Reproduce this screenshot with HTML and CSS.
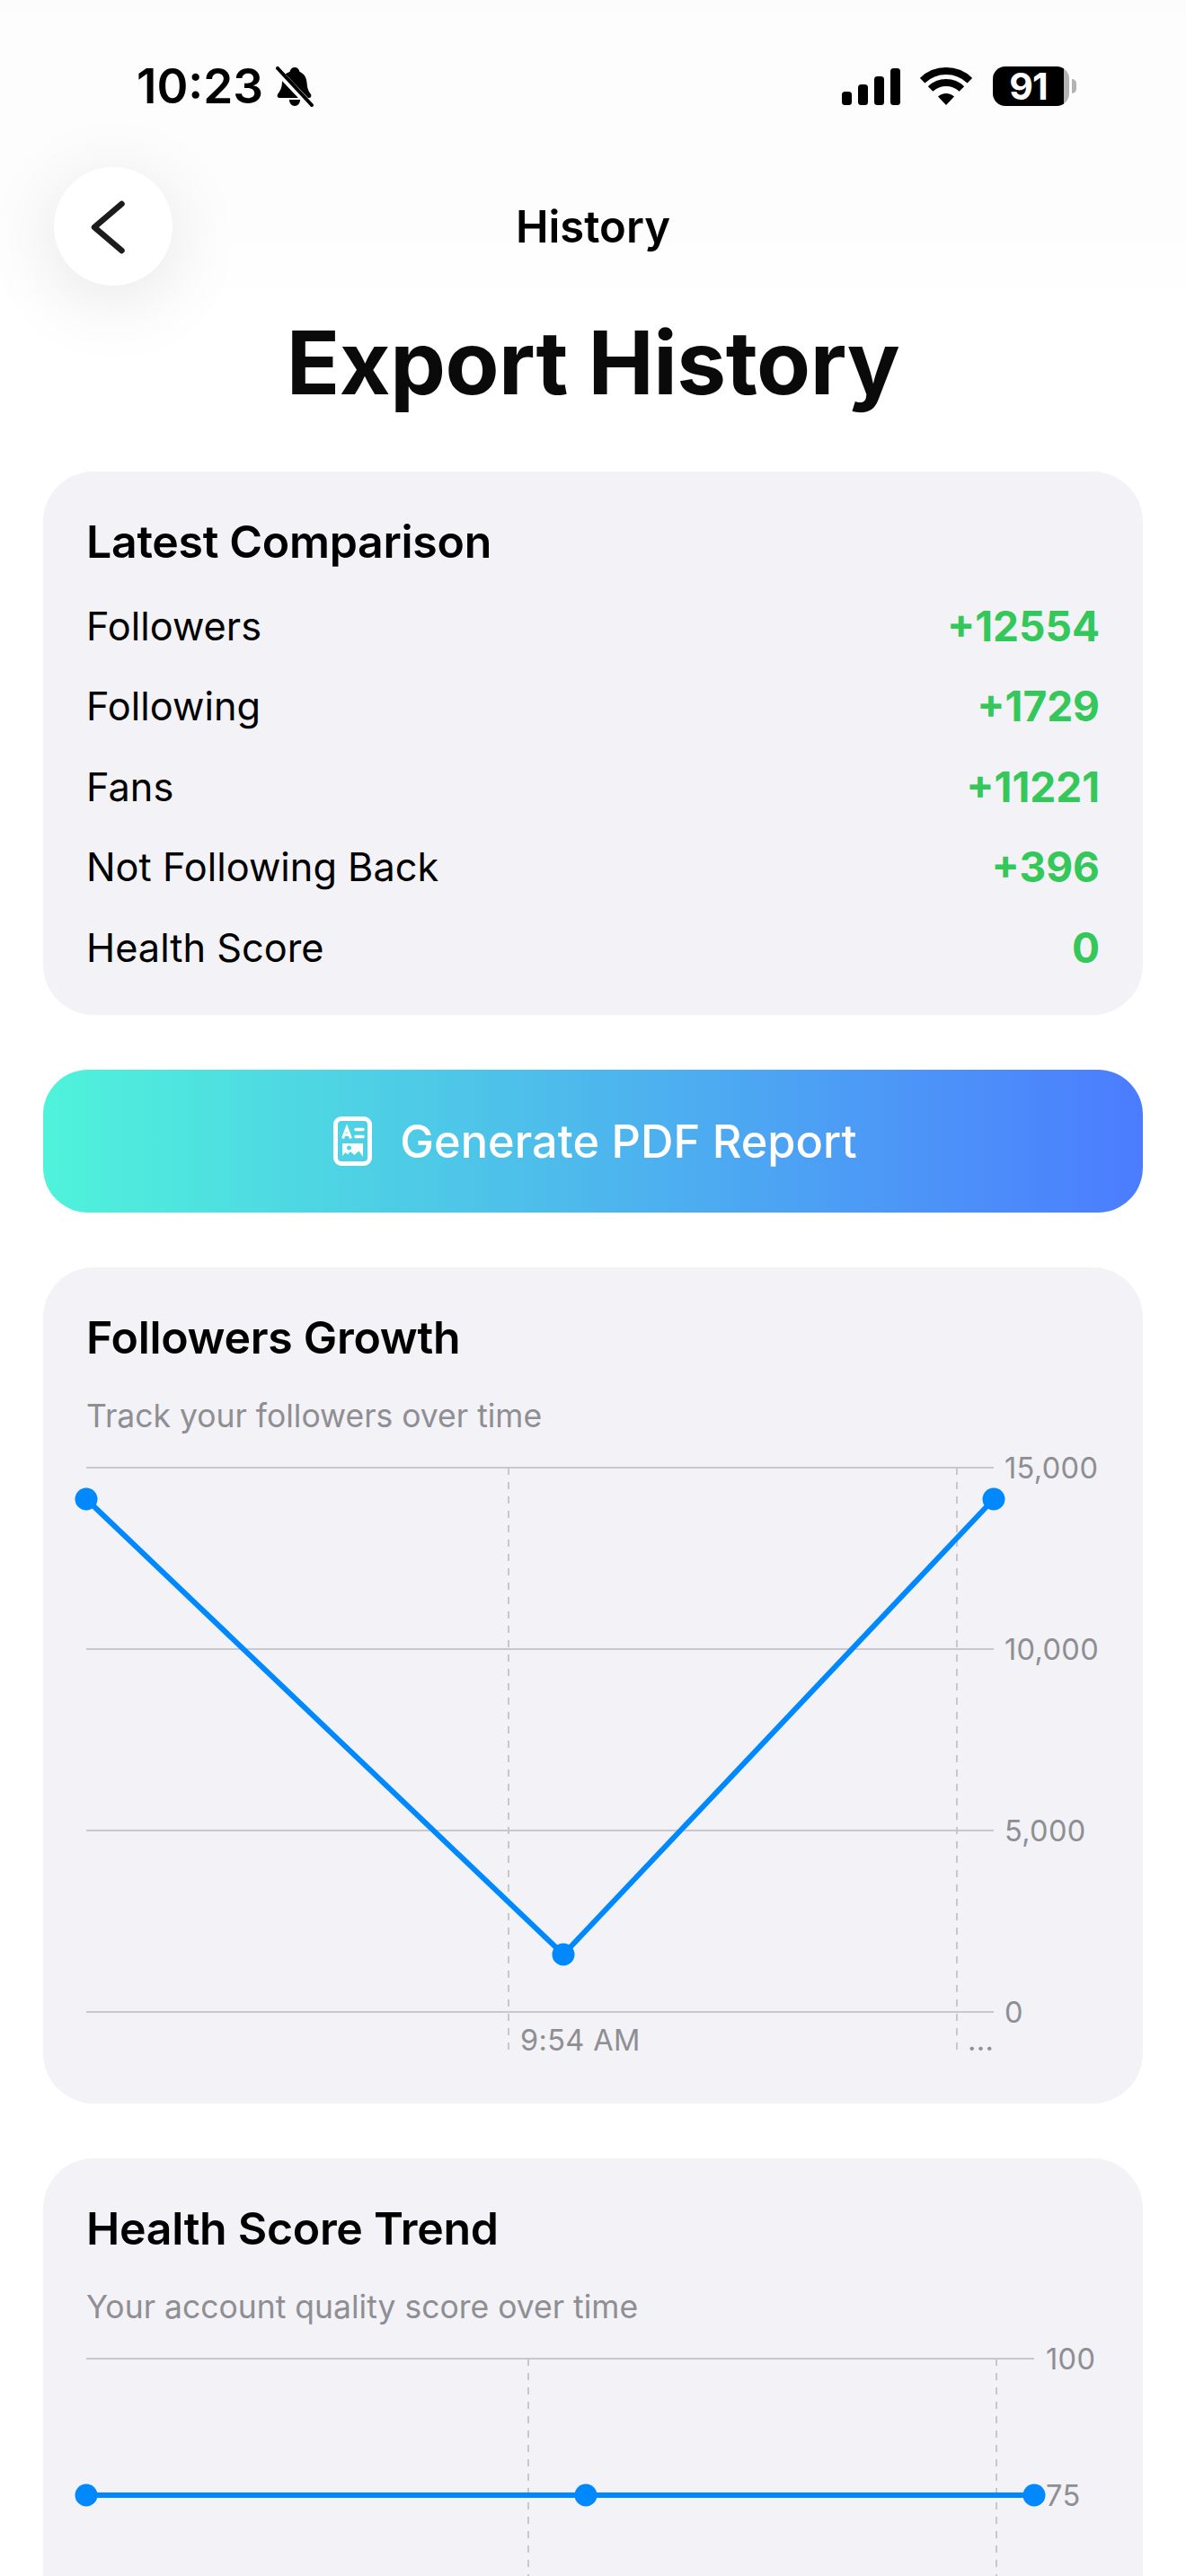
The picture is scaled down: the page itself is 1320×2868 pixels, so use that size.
FILE: index.html
```html
<!DOCTYPE html>
<html lang="en">
<head>
  <meta charset="UTF-8" />
  <title>Export History</title>
  <link rel="stylesheet" href="styles.css">
</head>
<body>
  <div class="page">
    <div class="statusbar">
      <div class="status-left">
        <span class="time">10:23</span>
        <svg class="bell" viewBox="0 0 42 45" width="42" height="45">
          <path d="M21 1c3 0 5 2 5.500 5 5 2 7.500 6 8 12 .5 6 1.500 9 4.500 13 1 2 0 4-2 4H4c-2 0-3-2-2-4 3-4 5-8 5-14C7 11 10 8 15.500 6 16 3 18 1 21 1z"/>
          <path d="M15 37h12c0 4-2.500 7-6 7s-6-3-6-7z"/>
          <path class="bell-gap" d="M0 3l38 40"/>
          <path class="bell-slash" d="M2 2l38 41"/>
        </svg>
      </div>
      <div class="status-right">
        <svg class="signal" viewBox="0 0 65 41" width="65" height="41">
          <rect x="0" y="26" width="11" height="15" rx="3.500"/>
          <rect x="18" y="18" width="11" height="23" rx="3.500"/>
          <rect x="36" y="9" width="11" height="32" rx="3.500"/>
          <rect x="54" y="0" width="11" height="41" rx="3.500"/>
        </svg>
        <svg class="wifi" viewBox="0 0 58 42" width="58" height="42">
          <path class="wifi-arc" d="M2.600 14.700A38 38 0 0 1 55.400 14.700"/>
          <path class="wifi-arc" d="M11.600 24A25 25 0 0 1 46.400 24"/>
          <path d="M29 42L20 32.600A13 13 0 0 1 38 32.600z"/>
        </svg>
        <div class="battery">
          <div class="battery-body"><span>91</span></div>
          <div class="battery-nub"></div>
        </div>
      </div>
    </div>

    <div class="nav">
      <div class="back">
        <svg viewBox="0 0 132 132" width="132" height="132">
          <path d="M75.500 41L45 67L75.500 93" class="chevron"/>
        </svg>
      </div>
      <div class="nav-title">History</div>
    </div>

    <h1 class="page-title">Export History</h1>

    <div class="content">
      <section class="card summary">
        <h2 class="card-title">Latest Comparison</h2>
        <div class="rows">
          <div class="row"><span>Followers</span><span class="delta">+12554</span></div>
          <div class="row"><span>Following</span><span class="delta">+1729</span></div>
          <div class="row"><span>Fans</span><span class="delta">+11221</span></div>
          <div class="row"><span>Not Following Back</span><span class="delta">+396</span></div>
          <div class="row"><span>Health Score</span><span class="delta">0</span></div>
        </div>
      </section>

      <button class="report-btn">
        <svg viewBox="0 0 43 55" width="43" height="55">
          <rect class="doc" x="2.500" y="2.500" width="38" height="50" rx="6.500"/>
          <path class="doc-a" d="M10.500 24.500L15 12.500l4.500 12M12.200 20.500h5.600"/>
          <path class="doc-line" d="M25 14.500h8M25 22.500h8"/>
          <path class="doc-pic" d="M10 30h23v15l-4.500-6.500-3.500 3-1.500 1.500-4.500-4-3 3.500-2.500-2.500L10 44z"/>
          <circle class="doc-hole" cx="17.500" cy="35" r="2.500"/>
        </svg>
        <span>Generate PDF Report</span>
      </button>

      <section class="card">
        <h2 class="card-title">Followers Growth</h2>
        <p class="card-sub">Track your followers over time</p>
        <svg class="chart chart-growth" viewBox="48 1600 1224 741" width="1224" height="741">
          <path class="grid" d="M96 1633H1106M96 1835H1106M96 2037H1106M96 2239H1106"/>
          <path class="tick" d="M566 1633V2288M1065 1633V2288"/>
          <polyline class="series" points="96,1668 627,2175 1106,1668"/>
          <circle class="dot" cx="96" cy="1668" r="12.500"/>
          <circle class="dot" cx="627" cy="2175" r="12.500"/>
          <circle class="dot" cx="1106" cy="1668" r="12.500"/>
          <text class="axis-y" x="1118" y="1645">15,000</text>
          <text class="axis-y" x="1118" y="1847">10,000</text>
          <text class="axis-y" x="1118" y="2049">5,000</text>
          <text class="axis-y" x="1118" y="2251">0</text>
          <text class="axis-x" x="579" y="2282">9:54 AM</text>
          <text class="axis-x" x="1077" y="2282">...</text>
        </svg>
      </section>

      <section class="card">
        <h2 class="card-title">Health Score Trend</h2>
        <p class="card-sub">Your account quality score over time</p>
        <svg class="chart chart-health" viewBox="48 2592 1224 400" width="1224" height="400">
          <path class="grid" d="M96 2625H1151M96 2777H1151M96 2928H1151"/>
          <path class="tick" d="M588 2625V2992M1109 2625V2992"/>
          <polyline class="series" points="96,2777 652,2777 1151,2777"/>
          <circle class="dot" cx="96" cy="2777" r="12.500"/>
          <circle class="dot" cx="652" cy="2777" r="12.500"/>
          <circle class="dot" cx="1151" cy="2777" r="12.500"/>
          <text class="axis-y" x="1164" y="2637">100</text>
          <text class="axis-y" x="1164" y="2789">75</text>
        </svg>
      </section>
    </div>
  </div>
</body>
</html>
```

FILE: styles.css
```css
:root {
  --card: #f2f2f7;
  --blue: #0088ff;
  --green: #34c759;
  --muted: #8e8e93;
  --line: #c7c7cc;
}

html, body {
  margin: 0;
  padding: 0;
}

body {
  font-family: Inter, "Liberation Sans", sans-serif;
  color: #000;
  background: #fff;
}

.page {
  width: 1320px;
  height: 2868px;
  overflow: hidden;
  background: linear-gradient(#fcfcfc 0, #fdfdfd 240px, #fff 360px);
}

/* status bar */
.statusbar {
  height: 186px;
  box-sizing: border-box;
  padding: 74px 122px 0 152px;
  display: flex;
  justify-content: space-between;
  align-items: flex-start;
}

.status-left {
  display: flex;
  align-items: center;
  gap: 14px;
  height: 45px;
}

.time {
  font-size: 53px;
  font-weight: 600;
  line-height: 45px;
}

.bell-gap {
  stroke: #fcfcfc;
  stroke-width: 8;
  fill: none;
}

.bell-slash {
  stroke: #000;
  stroke-width: 4;
  stroke-linecap: round;
  fill: none;
}

.status-right {
  display: flex;
  align-items: flex-end;
  height: 44px;
}

.signal {
  margin-right: 22px;
  margin-bottom: 1px;
}

.wifi {
  margin-right: 23px;
  margin-bottom: 1px;
}

.wifi-arc {
  fill: none;
  stroke: #000;
  stroke-width: 8;
}

.battery {
  display: flex;
  align-items: center;
  height: 44px;
}

.battery-body {
  width: 85px;
  height: 44px;
  box-sizing: border-box;
  border-radius: 14px;
  background: linear-gradient(90deg, #000 93%, #b3b3b3 93%);
  color: #fff;
  font-size: 41px;
  font-weight: 700;
  line-height: 44px;
  text-align: center;
  padding-right: 6px;
  letter-spacing: -1px;
}

.battery-nub {
  width: 5px;
  height: 16px;
  margin-left: 3px;
  background: #b3b3b3;
  border-radius: 0 6px 6px 0;
}

/* nav */
.nav {
  display: grid;
  grid-template-columns: 132px 1fr 132px;
  align-items: center;
  padding: 0 60px;
  height: 132px;
}

.back {
  width: 132px;
  height: 132px;
  border-radius: 50%;
  background: #fff;
  box-shadow: 0 16px 84px rgba(0, 0, 0, 0.1);
}

.chevron {
  fill: none;
  stroke: #1c1c1e;
  stroke-width: 6.500;
  stroke-linecap: round;
  stroke-linejoin: round;
}

.nav-title {
  text-align: center;
  font-size: 49px;
  font-weight: 600;
}

.page-title {
  margin: 26px 0 0;
  height: 181px;
  text-align: center;
  font-size: 98px;
  font-weight: 700;
  line-height: 120px;
  letter-spacing: -0.500px;
  color: #0a0a0a;
}

/* cards */
.content {
  display: flex;
  flex-direction: column;
  gap: 61px;
  padding: 0 48px;
}

.card {
  background: var(--card);
  border-radius: 56px;
  padding: 48px 48px 0;
}

.card-title {
  margin: 0;
  font-size: 50px;
  font-weight: 600;
  line-height: 60px;
  letter-spacing: -0.300px;
}

.card-sub {
  margin: 34px 0 0;
  font-size: 35.500px;
  line-height: 48px;
  color: var(--muted);
}

.rows {
  margin-top: 19px;
  padding-bottom: 30px;
}

.row {
  display: flex;
  justify-content: space-between;
  align-items: center;
  height: 89.500px;
  font-size: 43.300px;
}

.delta {
  color: var(--green);
  font-size: 46px;
  font-weight: 700;
}

.report-btn {
  display: flex;
  align-items: center;
  justify-content: center;
  gap: 31px;
  height: 159px;
  padding: 0 0 0 5px;
  border: none;
  border-radius: 50px;
  background: linear-gradient(90deg, #4ff3da, #4b7cff);
  color: #fff;
  font-family: inherit;
  font-size: 50.500px;
  font-weight: 500;
}

.doc {
  fill: none;
  stroke: #fff;
  stroke-width: 5;
}

.doc-a {
  fill: none;
  stroke: #fff;
  stroke-width: 3;
}

.doc-line {
  fill: none;
  stroke: #fff;
  stroke-width: 3.500;
  stroke-linecap: round;
}

.doc-pic {
  fill: #fff;
}

.doc-hole {
  fill: #4bd5ea;
}

/* charts */
.chart {
  display: block;
  margin: 0 -48px;
}

.grid {
  stroke: var(--line);
  stroke-width: 2;
  fill: none;
}

.tick {
  stroke: var(--line);
  stroke-width: 2;
  stroke-dasharray: 8 8;
  fill: none;
}

.series {
  fill: none;
  stroke: var(--blue);
  stroke-width: 6;
}

.dot {
  fill: var(--blue);
}

.axis-y,
.axis-x {
  font-family: Inter, "Liberation Sans", sans-serif;
  font-size: 32.500px;
  letter-spacing: 0.350px;
  fill: var(--muted);
}
```
